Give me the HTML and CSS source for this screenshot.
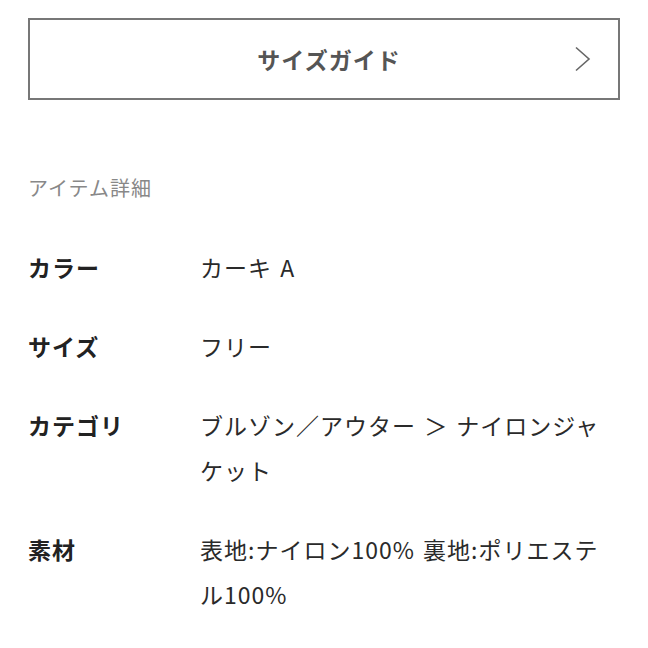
FILE: index.html
```html
<!DOCTYPE html>
<html lang="ja">
<head>
<meta charset="utf-8">
<link rel="stylesheet" href="styles.css">
</head>
<body>
<div class="page">
  <a class="guide">
    <span class="guide-label">サイズガイド</span>
    <svg class="chevron" width="18" height="26" viewBox="0 0 18 26"><path d="M2 1.5 L15 13 L2 24.5" fill="none" stroke="#666" stroke-width="1.6"/></svg>
  </a>
  <h2 class="section-title">アイテム詳細</h2>
  <dl class="details">
    <div class="row"><dt>カラー</dt><dd>カーキ A</dd></div>
    <div class="row"><dt>サイズ</dt><dd>フリー</dd></div>
    <div class="row"><dt>カテゴリ</dt><dd>ブルゾン／アウター ＞ ナイロンジャケット</dd></div>
    <div class="row"><dt>素材</dt><dd>表地:ナイロン100% 裏地:ポリエステル100%</dd></div>
  </dl>
</div>
</body>
</html>
```
FILE: styles.css
```css
html, body { margin: 0; padding: 0; background: #fff; }
body { font-family: "Noto Sans CJK JP", "Noto Sans", sans-serif; color: #222; }
.page { padding: 18px 28px 0 28px; width: 592px; }
.guide {
  display: flex; align-items: center; justify-content: center;
  position: relative;
  height: 78px; border: 2px solid #777; box-sizing: content-box;
}
.guide-label { font-size: 23px; font-weight: 700; color: #555; letter-spacing: 1px; padding-left: 10px; }
.chevron { position: absolute; right: 26px; top: 26px; }
.section-title { margin: 73px 0 0 0; font-size: 20px; line-height: 30px; font-weight: 400; color: #888; letter-spacing: 1px; }
.details { margin: 25px 0 0 0; }
.row { display: flex; padding: 17px 0; }
dt { width: 172px; flex: none; font-size: 23px; font-weight: 700; line-height: 45px; letter-spacing: 1px; }
dd { margin: 0; flex: none; width: 416px; font-size: 23px; line-height: 45px; letter-spacing: 1px; word-spacing: 2px; color: #2a2a2a; }
```
